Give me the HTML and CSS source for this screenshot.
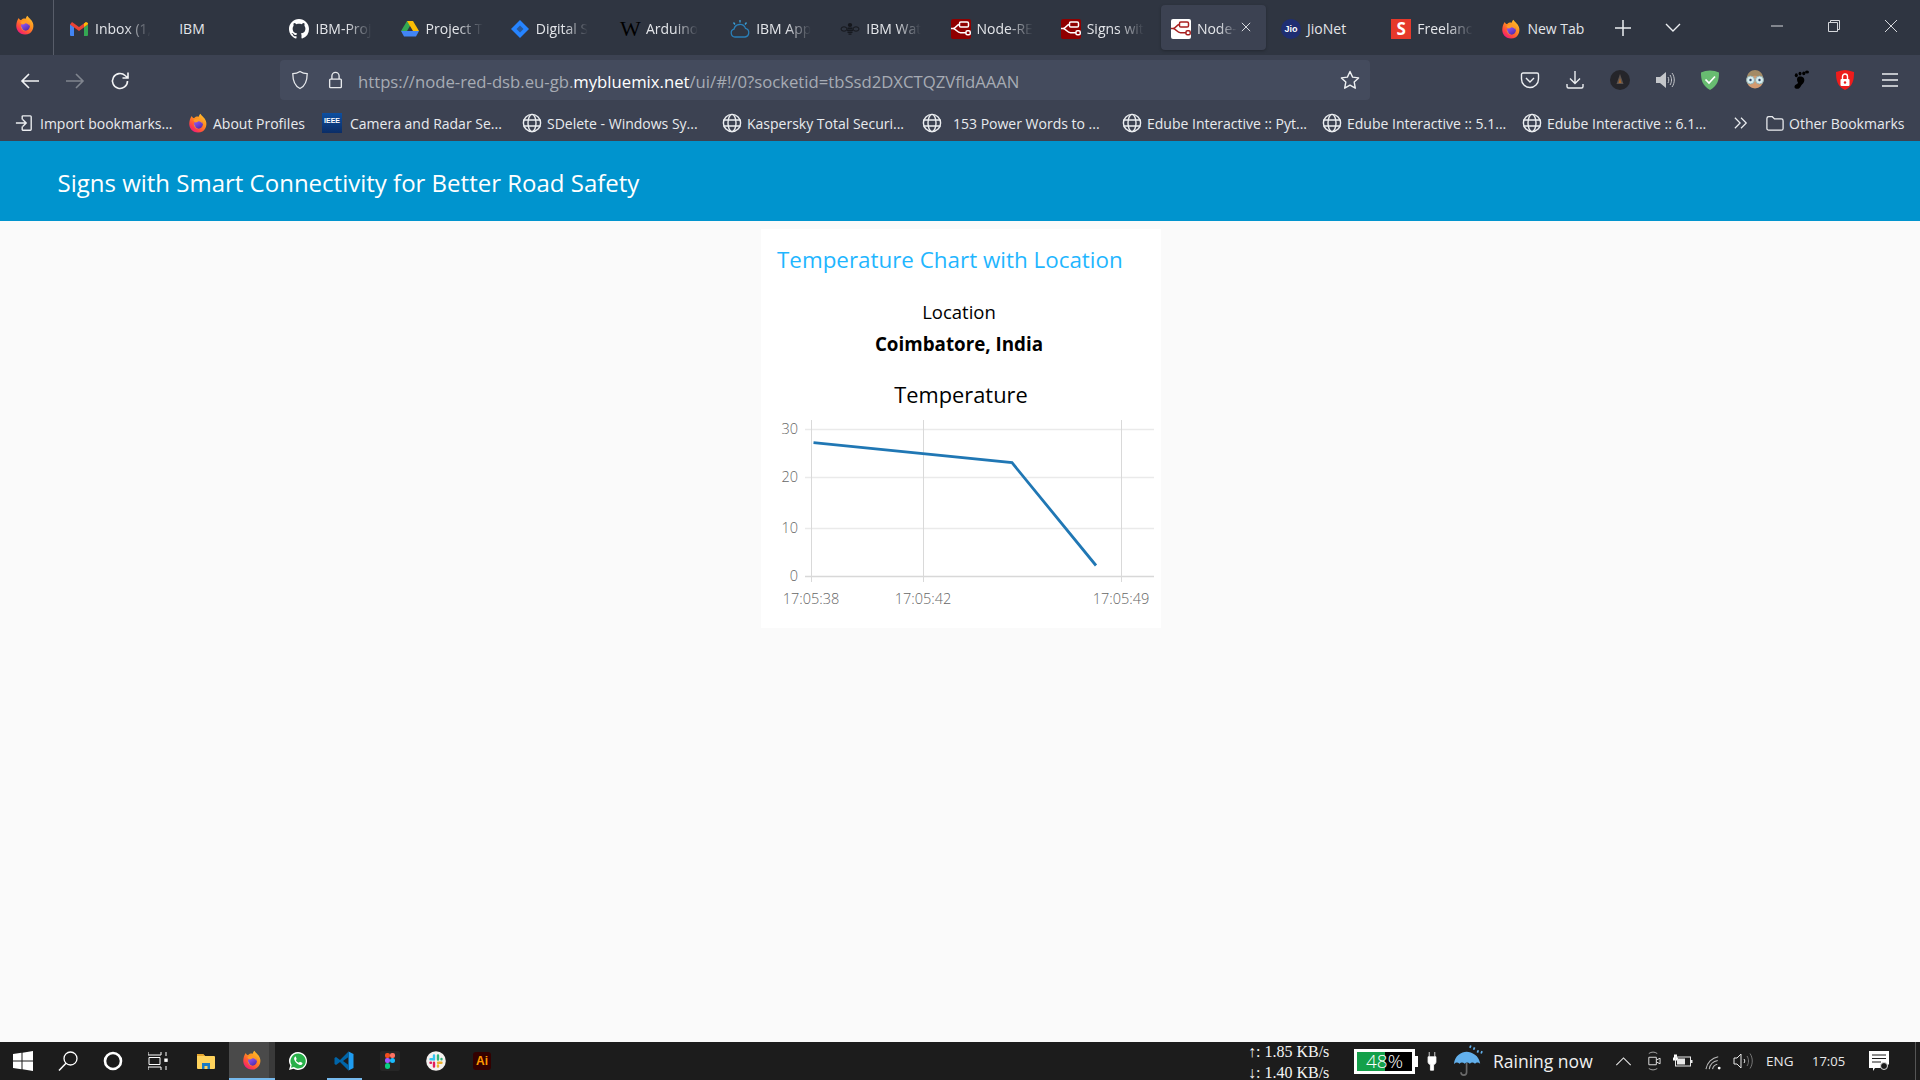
FILE: index.html
```html
<!DOCTYPE html>
<html lang="en">
<head>
<meta charset="utf-8">
<title>Node-RED Dashboard</title>
<link rel="stylesheet" href="styles.css">
</head>
<body>
<svg class="sprite" aria-hidden="true">
  <defs>
    <linearGradient id="ffg" x1="0.85" y1="0.05" x2="0.2" y2="0.95">
      <stop offset="0" stop-color="#ffc02e"/><stop offset="0.4" stop-color="#ff8f1f"/><stop offset="0.75" stop-color="#ff4a3d"/><stop offset="1" stop-color="#f0177f"/>
    </linearGradient>
    <linearGradient id="ffp" x1="0.2" y1="0" x2="0.8" y2="1"><stop offset="0" stop-color="#9a5cff"/><stop offset="1" stop-color="#4f2aa8"/></linearGradient>
    <symbol id="ff" viewBox="0 0 24 24">
      <path d="M4.500 3.500C5 5 6 6 7.500 6 9 4.500 11 4 13 4.500 13 3 14 1.500 15 .8c1 2.700 5 4.200 6.500 8.700C23.500 15 20.500 23.500 12 23.500 5 23.500 1.500 18 1.500 13c0-3 1-7 3-9.500z" fill="url(#ffg)"/>
      <circle cx="12.500" cy="13.500" r="5.300" fill="url(#ffp)"/>
      <path d="M6.500 8.500c2.500-2 6.500-2 9 0 1.500 1.200 2 3 1.800 4.500-1-2.200-3-3.200-5-3-.5 1-1.500 1.300-3 1.300C7.500 11 6.800 10 6.500 8.500z" fill="#ff9a26"/>
      <path d="M6.800 13c0 4 3 7 6.700 6.500-2.500-.5-4.500-2-5-4.500z" fill="#ffb534" opacity=".55"/>
    </symbol>
    <symbol id="globe" viewBox="0 0 20 20">
      <g fill="none" stroke="currentColor" stroke-width="1.400"><circle cx="10" cy="10" r="8.600"/><ellipse cx="10" cy="10" rx="4" ry="8.600"/><path d="M1.500 7h17M1.500 13h17"/></g>
    </symbol>
    <symbol id="nr" viewBox="0 0 20 20">
      <rect width="20" height="20" rx="2" fill="var(--bg)"/>
      <g fill="none" stroke="var(--fg)" stroke-width="1.500">
        <rect x="8.500" y="3" width="9" height="5" rx="1.300"/><rect x="15" y="11.800" width="4.200" height="4" rx="1.300"/>
        <path d="M0 9.500h2c3 0 3.500-4 6.500-4M2 9.500c3 0 4 4.300 7.500 4.300H15"/>
      </g>
    </symbol>
  </defs>
</svg>

<header class="tabbar">
  <div class="fx-btn"><svg class="ic20" viewBox="0 0 24 24"><use href="#ff"/></svg></div>
  <div class="tabs">
    <div class="tab"><svg class="ic20" viewBox="0 0 20 20"><path d="M1 17V5l4 3v9H2a1 1 0 0 1-1-1z" fill="#4285f4"/><path d="M19 17V5l-4 3v9h3a1 1 0 0 0 1-1z" fill="#34a853"/><path d="M1 5.500 10 12l9-6.500L17 3l-7 5-7-5z" fill="#ea4335"/><path d="M15 8l4-3V4l-2-1-2 1.500z" fill="#fbbc04"/></svg><span class="tab-text">Inbox (1,</span></div>
    <div class="tab"><span class="tab-text tab-text-full">IBM</span></div>
    <div class="tab"><svg class="ic20" viewBox="0 0 16 16"><path fill="#fff" d="M8 0C3.580 0 0 3.580 0 8c0 3.540 2.290 6.530 5.470 7.590.4.07.55-.17.55-.38 0-.19-.01-.82-.01-1.490-2.010.37-2.530-.49-2.690-.94-.09-.23-.48-.94-.82-1.130-.28-.15-.68-.52-.01-.53.63-.01 1.080.58 1.230.82.72 1.210 1.870.87 2.330.66.07-.52.28-.87.51-1.070-1.780-.2-3.640-.89-3.640-3.950 0-.87.31-1.590.82-2.150-.08-.2-.36-1.020.08-2.120 0 0 .67-.21 2.200.82.64-.18 1.320-.27 2-.27.68 0 1.360.09 2 .27 1.530-1.040 2.200-.82 2.200-.82.44 1.100.16 1.920.08 2.120.51.56.82 1.270.82 2.150 0 3.070-1.870 3.750-3.650 3.950.29.25.54.73.54 1.480 0 1.070-.01 1.930-.01 2.200 0 .21.15.46.55.38A8.013 8.013 0 0 0 16 8c0-4.420-3.580-8-8-8z"/></svg><span class="tab-text">IBM-Proj</span></div>
    <div class="tab"><svg class="ic20" viewBox="0 0 20 20"><path d="M7 2h6L7 12H1z" fill="#34a853"/><path d="M7 2h6l6 10h-6z" fill="#fbbc04"/><path d="M1 12h18l-3 5.500H4z" fill="#4285f4"/></svg><span class="tab-text">Project T</span></div>
    <div class="tab"><svg class="ic20" viewBox="0 0 20 20"><path d="M10 1l9 9-9 9-9-9z" fill="#2684ff"/><path d="M10 6.500 13.500 10 10 13.500 6.500 10z" fill="#2f3541" opacity=".55"/></svg><span class="tab-text">Digital S</span></div>
    <div class="tab"><span class="ic-w">W</span><span class="tab-text">Arduino</span></div>
    <div class="tab"><svg class="ic20" viewBox="0 0 20 20"><g fill="none" stroke="#2a7fb8" stroke-width="1.300"><path d="M5 18a4 4 0 0 1-1-7.800 6 6 0 0 1 11.500-.8A4.400 4.400 0 0 1 15 18z"/><path d="M10 1v2.500M3.500 3.500l1.500 2M16.500 3.500l-1.500 2" stroke="#3aa0d8"/></g></svg><span class="tab-text">IBM App</span></div>
    <div class="tab"><svg class="ic20" viewBox="0 0 20 20"><g fill="#15171c"><ellipse cx="10" cy="6" rx="2.200" ry="2"/><rect x="7.500" y="8.500" width="5" height="1.400"/><rect x="7" y="10.500" width="6" height="1.400"/><rect x="7.500" y="12.500" width="5" height="1.400"/><rect x="8.500" y="14.500" width="3" height="1.200"/></g><g fill="none" stroke="#15171c"><ellipse cx="4" cy="10" rx="3" ry="2.200"/><ellipse cx="16" cy="10" rx="3" ry="2.200"/></g></svg><span class="tab-text">IBM Wat</span></div>
    <div class="tab"><svg class="ic20 nr-dark"><use href="#nr"/></svg><span class="tab-text">Node-RE</span></div>
    <div class="tab"><svg class="ic20 nr-dark"><use href="#nr"/></svg><span class="tab-text">Signs wit</span></div>
    <div class="tab tab-active"><svg class="ic20 nr-light"><use href="#nr"/></svg><span class="tab-text">Node-</span>
      <svg class="tab-close" viewBox="0 0 12 12"><path d="M1 1l10 10M11 1 1 11" stroke="#e6e8ec" stroke-width="1.100"/></svg></div>
    <div class="tab"><span class="ic-jio">Jio</span><span class="tab-text tab-text-full">JioNet</span></div>
    <div class="tab"><span class="ic-s">S</span><span class="tab-text">Freelanc</span></div>
    <div class="tab"><svg class="ic20" viewBox="0 0 24 24"><use href="#ff"/></svg><span class="tab-text tab-text-full">New Tab</span></div>
  </div>
  <svg class="tb-plus" viewBox="0 0 16 16"><path d="M8 0v16M0 8h16" stroke="#eceef1" stroke-width="1.500"/></svg>
  <svg class="tb-chev" viewBox="0 0 16 10"><path d="M1 1l7 7 7-7" fill="none" stroke="#eceef1" stroke-width="1.400"/></svg>
  <div class="win-controls">
    <svg class="win-ic" viewBox="0 0 14 14"><path d="M1 7h12" stroke="#d6d8dc" stroke-width="1"/></svg>
    <svg class="win-ic" viewBox="0 0 14 14"><path d="M3.500 3.500V1.500h9v9h-2M1.500 3.500h9v9h-9z" fill="none" stroke="#d6d8dc"/></svg>
    <svg class="win-ic" viewBox="0 0 14 14"><path d="M1 1l12 12M13 1 1 13" stroke="#d6d8dc"/></svg>
  </div>
</header>

<nav class="toolbar">
  <div class="nav-group">
    <svg class="nav-ic" viewBox="0 0 20 20"><path d="M19 10H2M9 3l-7 7 7 7" fill="none" stroke="#f2f3f5" stroke-width="1.600"/></svg>
    <svg class="nav-ic" viewBox="0 0 20 20"><path d="M1 10h17M11 3l7 7-7 7" fill="none" stroke="#80858f" stroke-width="1.600"/></svg>
    <svg class="nav-ic" viewBox="0 0 20 20"><path d="M17.500 10a7.500 7.500 0 1 1-2.400-5.500L18 7M18 1.500V7h-5.500" fill="none" stroke="#f2f3f5" stroke-width="1.600"/></svg>
  </div>
  <div class="urlbar">
    <svg class="url-shield" viewBox="0 0 20 22"><path d="M10 1.500c2.500 1.800 5 2.500 8 2.500 0 7-1 13-8 16.500C3 17 2 11 2 4c3 0 5.500-.7 8-2.500z" fill="none" stroke="#e7e9ec" stroke-width="1.400"/></svg>
    <svg class="url-lock" viewBox="0 0 16 20"><path d="M4 9V5.500a4 4 0 0 1 8 0V9M2.500 9h11a1 1 0 0 1 1 1v7.500a1 1 0 0 1-1 1h-11a1 1 0 0 1-1-1V10a1 1 0 0 1 1-1z" fill="none" stroke="#e7e9ec" stroke-width="1.500"/></svg>
    <div class="url-text">https://node-red-dsb.eu-gb.<span class="url-host">mybluemix.net</span>/ui/#!/0?socketid=tbSsd2DXCTQZVfldAAAN</div>
    <svg class="url-star" viewBox="0 0 20 20"><path d="M10 1.500l2.600 5.600 6 .8-4.400 4.200 1.100 6.100L10 15.200l-5.300 3 1.100-6.100L1.400 7.900l6-.8z" fill="none" stroke="#eef0f2" stroke-width="1.400" stroke-linejoin="round"/></svg>
  </div>
  <div class="ext-group">
    <div class="ext"><svg class="ic20" viewBox="0 0 20 20"><path d="M3 3h14a1.500 1.500 0 0 1 1.500 1.500V9a8.500 8.500 0 0 1-17 0V4.500A1.500 1.500 0 0 1 3 3z" fill="none" stroke="#eceef1" stroke-width="1.400"/><path d="M6 8l4 4 4-4" fill="none" stroke="#eceef1" stroke-width="1.400"/></svg></div>
    <div class="ext"><svg class="ic20" viewBox="0 0 20 20"><path d="M10 1v12M5 8.500l5 5 5-5M2 14v2.500a1.500 1.500 0 0 0 1.500 1.500h13a1.500 1.500 0 0 0 1.500-1.500V14" fill="none" stroke="#eceef1" stroke-width="1.400"/></svg></div>
    <div class="ext"><svg class="ic20" viewBox="0 0 20 20"><circle cx="10" cy="10" r="10" fill="#25252a"/><path d="M10 4l3.500 10h-7z" fill="#5c5450"/><path d="M10 8l1.500 5h-3z" fill="#a5662e"/></svg></div>
    <div class="ext"><svg class="ic20" viewBox="0 0 20 20"><path d="M1 7h4l6-5v16l-6-5H1z" fill="#c4c6ca"/><path d="M13 7c1 2 1 4 0 6M15 5c2 3 2 7 0 10M17 3c3 4 3 10 0 14" fill="none" stroke="#c4c6ca" stroke-width="1"/></svg></div>
    <div class="ext"><svg class="ic20" viewBox="0 0 20 20"><path d="M10 .5c3 0 6.500.8 9 2 0 7-1 13-9 17.500-8-4.500-9-10.500-9-17.500 2.500-1.200 6-2 9-2z" fill="#68bc71"/><path d="M5.500 9.500l3.500 3.500 6-6.500" fill="none" stroke="#fff" stroke-width="1.700"/></svg></div>
    <div class="ext"><svg class="ic20" viewBox="0 0 20 20"><circle cx="10" cy="10" r="8.500" fill="#d49a70"/><path d="M2 8c0-5 4-8 8-8s8 3 8 8c-3-3-13-3-16 0z" fill="#a38b66"/><circle cx="5.500" cy="10" r="4" fill="#d6ecef" stroke="#8aa" stroke-width=".8"/><circle cx="14.500" cy="10" r="4" fill="#d6ecef" stroke="#8aa" stroke-width=".8"/><circle cx="5.500" cy="10" r="1.200" fill="#346"/><circle cx="14.500" cy="10" r="1.200" fill="#346"/></svg></div>
    <div class="ext"><svg class="ic20" viewBox="0 0 20 20"><g fill="#000"><path d="M8 7c2-1 5-.5 6 1.500 1 2.500-.5 5-2 6-1 1-1 2-2.500 3.500S4 19 4.500 16.500 8 14.500 8 12.500C7 11.500 6.500 8 8 7z"/><ellipse cx="6.300" cy="5.300" rx="1.500" ry="2"/><ellipse cx="10" cy="3.600" rx="1.500" ry="1.900"/><ellipse cx="13.800" cy="3.400" rx="1.600" ry="1.800"/><ellipse cx="17" cy="2" rx="2" ry="1.600"/></g></svg></div>
    <div class="ext"><svg class="ic20" viewBox="0 0 20 20"><path d="M10 0c3 .3 6 1 9 2 0 8-1 14-9 18-8-4-9-10-9-18 3-1 6-1.700 9-2z" fill="#ee1c1c"/><rect x="5.500" y="9" width="9" height="7" rx="1" fill="#fff"/><path d="M7.500 9V6.500a2.500 2.500 0 0 1 5 0V9" fill="none" stroke="#fff" stroke-width="1.400"/><circle cx="10" cy="12.500" r="1.200" fill="#ee1c1c"/></svg></div>
    <div class="ext"><svg class="ic20" viewBox="0 0 20 20"><path d="M2 4h16M2 10h16M2 16h16" stroke="#eceef1" stroke-width="1.500"/></svg></div>
  </div>
</nav>

<nav class="bookmarks">
  <div class="bm bm-import"><svg class="ic18" viewBox="0 0 20 20"><path d="M8 2h9a1 1 0 0 1 1 1v14a1 1 0 0 1-1 1H8M8 6V2M8 18v-4M1 10h11M8.500 6l4 4-4 4" fill="none" stroke="#eceef1" stroke-width="1.500"/></svg><span class="bm-text">Import bookmarks...</span></div>
  <div class="bm bm-profiles"><svg class="ic20" viewBox="0 0 24 24"><use href="#ff"/></svg><span class="bm-text">About Profiles</span></div>
  <div class="bm bm-wide"><span class="ic-ieee">IEEE</span><span class="bm-text bm-gap-s">Camera and Radar Se...</span></div>
  <div class="bm bm-wide"><svg class="ic20"><use href="#globe"/></svg><span class="bm-text">SDelete - Windows Sy...</span></div>
  <div class="bm bm-wide"><svg class="ic20"><use href="#globe"/></svg><span class="bm-text">Kaspersky Total Securi...</span></div>
  <div class="bm bm-wide"><svg class="ic20"><use href="#globe"/></svg><span class="bm-text bm-gap">153 Power Words to ...</span></div>
  <div class="bm bm-wide"><svg class="ic20"><use href="#globe"/></svg><span class="bm-text">Edube Interactive :: Pyt...</span></div>
  <div class="bm bm-wide"><svg class="ic20"><use href="#globe"/></svg><span class="bm-text">Edube Interactive :: 5.1...</span></div>
  <div class="bm bm-wide"><svg class="ic20"><use href="#globe"/></svg><span class="bm-text">Edube Interactive :: 6.1...</span></div>
  <svg class="bm-more" viewBox="0 0 16 14"><path d="M1 1l6 6-6 6M8 1l6 6-6 6" fill="none" stroke="#eceef1" stroke-width="1.400"/></svg>
  <div class="bm"><svg class="ic18" viewBox="0 0 20 18"><path d="M1 4a2 2 0 0 1 2-2h4l2.500 2.500H17a2 2 0 0 1 2 2V15a2 2 0 0 1-2 2H3a2 2 0 0 1-2-2z" fill="none" stroke="#eceef1" stroke-width="1.400"/></svg><span class="bm-text">Other Bookmarks</span></div>
</nav>

<div class="app-header"><h1 class="app-title">Signs with Smart Connectivity for Better Road Safety</h1></div>

<main class="content">
  <section class="card">
    <h2 class="card-title">Temperature Chart with Location</h2>
    <div class="loc">
      <div class="loc-label">Location</div>
      <div class="loc-value">Coimbatore, India</div>
    </div>
    <div class="chart-title">Temperature</div>
    <svg class="chart" viewBox="761 412 400 216">
      <g class="grid-h">
        <path d="M805 429.500H1154M805 477.500H1154M805 528.500H1154"/>
      </g>
      <path class="axis-x" d="M805 576.500H1154"/>
      <path class="grid-v" d="M811.500 420V582M923.500 420V582M1121.500 420V582"/>
      <polyline class="series" points="813.500,442.700 1012,462.700 1096,565.500"/>
      <g class="ytick">
        <text x="798" y="434">30</text><text x="798" y="482">20</text><text x="798" y="533">10</text><text x="798" y="581">0</text>
      </g>
      <g class="xtick">
        <text x="811" y="604">17:05:38</text><text x="923" y="604">17:05:42</text><text x="1121" y="604">17:05:49</text>
      </g>
    </svg>
  </section>
</main>

<footer class="taskbar">
  <div class="task-group">
    <div class="task"><svg class="ic20" viewBox="0 0 20 20"><path d="M0 3l8.500-1.200V9.500H0zM9.500 1.700 20 0v9.500H9.500zM0 10.500h8.500v7.700L0 17zM9.500 10.500H20V20L9.500 18.300z" fill="#fff"/></svg></div>
    <div class="task"><svg class="ic20" viewBox="0 0 20 20"><circle cx="12.500" cy="7.500" r="6.500" fill="none" stroke="#fff" stroke-width="1.300"/><path d="M8 12.300 1 19.500" stroke="#fff" stroke-width="1.500"/></svg></div>
    <div class="task"><svg class="ic20" viewBox="0 0 20 20"><circle cx="10" cy="10" r="8" fill="none" stroke="#fff" stroke-width="2.600"/></svg></div>
    <div class="task"><svg class="ic20" viewBox="0 0 20 20"><path d="M0 1v3h13V1M0 19v-3h13v3M1 6.500h11v7H1zM18 1v4M18 15v4" fill="none" stroke="#fff" stroke-width="1"/><rect x="16.300" y="7.500" width="3.400" height="3.400" fill="#fff"/></svg></div>
  </div>
  <div class="task-group task-apps">
    <div class="task-app"><svg class="ic20" viewBox="0 0 20 18"><path d="M1 3a1 1 0 0 1 1-1h5l2 2h9a1 1 0 0 1 1 1v11a1 1 0 0 1-1 1H2a1 1 0 0 1-1-1z" fill="#ffd35c"/><path d="M1 2h6l2 2H1z" fill="#e8a72e"/><path d="M6 17v-6h8v6h-2.500v-3h-3v3z" fill="#1a7bc4"/></svg></div>
    <div class="task-app task-active"><svg class="ic20" viewBox="0 0 24 24"><use href="#ff"/></svg></div>
    <div class="task-app"><svg class="ic20" viewBox="0 0 20 20"><path d="M10 1a9 9 0 0 0-7.700 13.600L1 19l4.500-1.200A9 9 0 1 0 10 1z" fill="#fff"/><path d="M10 2.500a7.500 7.500 0 0 0-6.300 11.500L3 16.800l2.900-.7A7.500 7.500 0 1 0 10 2.500z" fill="#29b04a"/><path d="M7 5.800c-.9.700-1.200 2-.5 3.500 1 2 2.700 3.600 4.700 4.400 1.400.5 2.700.1 3.200-1 .2-.6-.1-.9-.6-1.100l-1.500-.7c-.4-.2-.6 0-.9.400-.3.400-.6.600-1.100.3a6 6 0 0 1-2.300-2.200c-.2-.4.1-.7.400-1 .2-.3.300-.5.100-.9l-.6-1.500c-.2-.5-.6-.6-.9-.2z" fill="#fff"/></svg></div>
    <div class="task-app task-open"><svg class="ic20" viewBox="0 0 20 20"><path d="M14.500.5 19.500 3v14l-5 2.500z" fill="#1f9cf0"/><path d="M14.500.5 6 9 2 6 .5 7v6L2 14l4-3 8.500 8.500V14L9 10l5.500-4z" fill="#0065a9"/></svg></div>
    <div class="task-app"><svg class="ic20" viewBox="0 0 20 20"><rect width="20" height="20" rx="2" fill="#262626"/><rect x="5" y="2" width="5" height="5" rx="2" fill="#f24e1e"/><rect x="10" y="2" width="5" height="5" rx="2" fill="#ff7262"/><rect x="5" y="7" width="5" height="5" rx="2" fill="#a259ff"/><circle cx="12.500" cy="9.500" r="2.500" fill="#1abcfe"/><rect x="5" y="12" width="5" height="6" rx="2.500" fill="#0acf83"/></svg></div>
    <div class="task-app"><svg class="ic20" viewBox="0 0 20 20"><circle cx="10" cy="10" r="9.800" fill="#f4f1ef"/><g stroke-width="2.400" stroke-linecap="round"><path d="M8 4.500v4M4.500 8.300H8" stroke="#36c5f0" fill="none"/><path d="M15.500 8v.3M12 4.500v4" stroke="#2eb67d"/><path d="M15.500 11.700H12M12 15.500v-1" stroke="#ecb22e"/><path d="M4.500 11.700H5M8 11.700v3.800" stroke="#e01e5a"/></g></svg></div>
    <div class="task-app"><span class="ic-ai">Ai</span></div>
  </div>
  <div class="tray">
    <div class="netspeed"><div>↑: 1.85 KB/s</div><div>↓: 1.40 KB/s</div></div>
    <div class="battery-big"><span class="battery-big-text">48%</span></div>
    <svg class="plug" viewBox="0 0 10 24"><path d="M1.500 0v6M8.500 0v6M0 6h10v7a4 4 0 0 1-3 3v7H3v-7a4 4 0 0 1-3-3z" fill="#fff" stroke="#fff"/></svg>
    <svg class="umbrella" viewBox="0 0 32 34"><path d="M1 20C2 11 9 7 14.500 7S28 11 29 20c-2-2-4-2-5.500 0-2-2-4-2-5.500 0-2-2-4-2-5.500 0-2-2-4-2-5.500 0-2-2-4-2-5.500 0z" fill="#62b0ec"/><path d="M14.500 19v10a3 3 0 0 1-6 0" fill="none" stroke="#6a6a6a" stroke-width="1.800"/><path d="M22 5l1-2.500M26 8l1-2.500M30 9l1-2.500M18 3l1-2.500" stroke="#62b0ec" stroke-width="1.800"/></svg>
    <span class="weather">Raining now</span>
    <svg class="tray-chev" viewBox="0 0 18 10"><path d="M1 9l8-8 8 8" fill="none" stroke="#e8e8e8" stroke-width="1.200"/></svg>
    <svg class="tray-meet" viewBox="0 0 16 22"><path d="M3 7h8v8H3zM11 10l4-2v6l-4-2" fill="none" stroke="#e8e8e8"/><path d="M3 3c3-2 6-2 9 0M3 19c3 2 6 2 9 0" fill="none" stroke="#aaa"/></svg>
    <svg class="tray-batt" viewBox="0 0 20 14"><path d="M1 .5v3h3v-3M0 3.500h5v3H0z" fill="#fff"/><rect x="2.500" y="3" width="15" height="9" fill="none" stroke="#e8e8e8"/><rect x="4" y="4.500" width="8" height="6" fill="#e8e8e8"/><rect x="18" y="6" width="1.500" height="3" fill="#e8e8e8"/></svg>
    <svg class="tray-wifi" viewBox="0 0 18 18"><path d="M1 17a16 16 0 0 1 13-13M4.500 17a11 11 0 0 1 9-9M8 17a6.500 6.500 0 0 1 5-5" fill="none" stroke="#bbb" stroke-width="1.100"/><circle cx="15" cy="16" r="1.500" fill="#fff"/></svg>
    <svg class="tray-vol" viewBox="0 0 20 20"><path d="M1 7h3l4-4v14l-4-4H1z" fill="none" stroke="#e8e8e8"/><path d="M11 8c1 1.500 1 2.500 0 4" fill="none" stroke="#e8e8e8"/><path d="M14 5c2 3 2 7 0 10M17 2.500c3 4.500 3 10.500 0 15" fill="none" stroke="#777"/></svg>
    <span class="tray-lang">ENG</span>
    <span class="tray-clock">17:05</span>
    <svg class="tray-notif" viewBox="0 0 20 20"><path d="M0 0h20v13l-4 4H6l-2 3v-3H0z" fill="#fff"/><path d="M3 4h14M3 7.500h14M3 11h9" stroke="#1c1c1c" stroke-width="1.200"/><circle cx="15" cy="15" r="3.500" fill="#1c1c1c" stroke="#ddd"/></svg>
    <span class="tray-end"></span>
  </div>
</footer>
</body>
</html>
```
FILE: styles.css
```css
* { box-sizing: border-box; }
html, body { margin: 0; height: 100%; }
body {
  display: flex;
  flex-direction: column;
  height: 1080px;
  overflow: hidden;
  font-family: "Open Sans", "Noto Sans", sans-serif;
  background: #fafafa;
}
.sprite { display: block; width: 0; height: 0; overflow: hidden; }
.ic20 { display: block; width: 20px; height: 20px; flex: none; color: #eceef1; }
.ic18 { display: block; width: 18px; height: 18px; flex: none; }

/* Tab strip */
.tabbar {
  display: flex;
  align-items: flex-start;
  height: 55px;
  flex: none;
  background: #2f3541;
  color: #e4e6ea;
}
.fx-btn {
  width: 54px;
  height: 55px;
  padding: 15px 0 0 15px;
  border-right: 1px solid #585d69;
  flex: none;
}
.tabs { display: flex; margin: 5px 0 0 5px; flex: none; }
.tab {
  display: flex;
  align-items: center;
  gap: 6px;
  width: 105px;
  height: 45px;
  margin-right: 5.2px;
  padding: 2px 0 0 10px;
  border-radius: 4px;
  flex: none;
}
.tab-active { background: #3c4252; box-shadow: 0 1px 3px rgba(0,0,0,.25); position: relative; }
.tab-text {
  width: max-content;
  white-space: nowrap;
  font-size: 14px;
  color: #e4e6ea;
  -webkit-mask-image: linear-gradient(90deg, #000 55%, transparent 100%);
  mask-image: linear-gradient(90deg, #000 55%, transparent 100%);
}
.tab-text-full { -webkit-mask-image: none; mask-image: none; }
.tab-close { position: absolute; right: 15px; top: 17px; width: 10px; height: 10px; }
.ic-w { width: 20px; font: 22px/20px "Liberation Serif", serif; color: #000; text-align: center; flex: none; }
.ic-jio {
  width: 20px; height: 20px; flex: none; border-radius: 50%;
  background: #1f2e72; color: #fff; font: 700 9px/20px "Liberation Sans", sans-serif; text-align: center;
}
.ic-s {
  width: 20px; height: 20px; flex: none;
  background: #e6392b; color: #fff; font: 700 17px/20px "Open Sans", sans-serif; text-align: center;
}
.nr-dark { --bg: #8f0000; --fg: #fff; }
.nr-light { --bg: #fff; --fg: #a82020; }
.tb-plus { width: 16px; height: 16px; margin: 20px 0 0 13px; flex: none; }
.tb-chev { width: 16px; height: 10px; margin: 23px 0 0 34px; flex: none; }
.win-controls { display: flex; gap: 43px; margin: 19px 0 0 auto; padding-right: 22px; }
.win-ic { width: 14px; height: 14px; display: block; }

/* Toolbar */
.toolbar {
  display: flex;
  align-items: flex-start;
  height: 53px;
  flex: none;
  background: #3c4252;
  padding-top: 5px;
}
.nav-group { display: flex; gap: 25px; width: 280px; padding: 11px 0 0 20px; flex: none; }
.nav-ic { width: 20px; height: 20px; display: block; flex: none; }
.urlbar {
  display: flex;
  align-items: center;
  width: 1090px;
  height: 40px;
  flex: none;
  background: #444b5d;
  border-radius: 4px;
  padding-left: 11px;
}
.url-shield { width: 18px; height: 20px; flex: none; margin-right: 19px; }
.url-lock { width: 15px; height: 18px; flex: none; margin-right: 15px; }
.url-text { font-size: 16.700px; line-height: 24px; padding-top: 3px; color: #a7abb4; white-space: nowrap; flex: 1; }
.url-host { color: #fff; }
.url-star { width: 20px; height: 20px; margin-right: 10px; flex: none; }
.ext-group { display: flex; margin-left: 137.5px; padding-top: 10px; }
.ext { width: 45px; display: flex; justify-content: center; }

/* Bookmarks */
.bookmarks {
  display: flex;
  align-items: center;
  height: 33px;
  flex: none;
  background: #3c4252;
  padding: 0 0 3px 15px;
}
.bm { display: flex; align-items: center; gap: 5px; flex: none; }
.bm-import { width: 173px; gap: 7px; }
.bm-profiles { width: 134px; }
.bm-wide { width: 200px; }
.bm-gap-s { margin-left: 3px; }
.bm-gap { margin-left: 6px; }
.bm-text { font-size: 14px; color: #e9ebee; white-space: nowrap; }
.ic-ieee {
  width: 20px; height: 20px; flex: none;
  background: linear-gradient(#0d4fa0, #0b2d66);
  color: #fff; font: 700 7px/16px "Liberation Sans", sans-serif; text-align: center;
}
.bm-more { width: 14px; height: 14px; margin: 0 18px 0 12px; flex: none; }

/* Dashboard */
.app-header {
  display: flex;
  align-items: center;
  height: 80px;
  flex: none;
  background: #0094ce;
  padding: 3px 0 0 57.500px;
}
.app-title { margin: 0; font-size: 24px; font-weight: 400; color: #fff; }
.content {
  flex: 1;
  display: flex;
  justify-content: center;
  align-items: flex-start;
  padding: 8px 0 0 2px;
  background: #fafafa;
}
.card {
  width: 400px;
  height: 399px;
  background: #fff;
  display: flex;
  flex-direction: column;
}
.card-title {
  margin: 13px 0 0 16px;
  font-size: 22.400px;
  font-weight: 400;
  line-height: 36px;
  color: #1fb6ff;
  white-space: nowrap;
}
.loc { margin-top: 18px; padding-right: 4px; text-align: center; color: #000; font-size: 18.500px; line-height: 31px; }
.loc-value { margin-top: 2px; font-weight: 700; font-size: 18.800px; }
.chart-title { margin-top: 18px; text-align: center; font-size: 21.800px; line-height: 34px; color: #000; }
.chart { display: block; width: 400px; height: 216px; }
.grid-h path { stroke: #eaeaea; stroke-width: 1.500; fill: none; }
.axis-x { stroke: #d8d8d8; stroke-width: 1.500; fill: none; }
.grid-v { stroke: #d9d9d9; stroke-width: 1; fill: none; }
.series { stroke: #2077b4; stroke-width: 2.800; fill: none; }
.ytick text, .xtick text { font-family: "Open Sans", sans-serif; font-weight: 300; font-size: 14.500px; fill: #666; }
.ytick text { text-anchor: end; }
.xtick text { text-anchor: middle; }

/* Taskbar */
.taskbar {
  display: flex;
  align-items: center;
  height: 38px;
  flex: none;
  background: #1c1c1c;
  color: #fff;
}
.task-group { display: flex; height: 38px; flex: none; }
.task { width: 45px; display: flex; align-items: center; justify-content: center; }
.task-apps { margin-left: 3px; }
.task-app { width: 46px; display: flex; align-items: center; justify-content: center; position: relative; }
.task-active { background: linear-gradient(90deg, #4a4a4a 0 40px, #3a3a3a 40px); border-bottom: 2px solid #76b9ed; }
.task-open::after { content: ""; position: absolute; left: 6px; bottom: 0; width: 35px; height: 2px; background: #76b9ed; }
.ic-ai {
  width: 18px; height: 18px; border-radius: 3px;
  background: #330000; color: #ff9a00;
  font: 700 12px/18px "Liberation Sans", sans-serif; text-align: center;
}
.tray { display: flex; align-items: center; height: 38px; margin-left: 743px; flex: none; }
.netspeed { width: 106px; font: 16px/21px "Liberation Serif", serif; color: #f4f4f4; white-space: nowrap; margin-top: 2px; }
.battery-big {
  position: relative;
  width: 61px; height: 25px;
  border: 3px solid #fff;
  background: linear-gradient(90deg, #14a04a 0 28px, #000 28px);
  display: flex; align-items: center; justify-content: center;
  flex: none;
}
.battery-big::after { content: ""; position: absolute; right: -6px; top: 4px; width: 3px; height: 11px; background: #fff; }
.battery-big-text { font-size: 19px; line-height: 19px; color: #fff; font-weight: 300; }
.plug { width: 10px; height: 19px; margin-left: 12px; flex: none; }
.umbrella { width: 30px; height: 32px; margin: 0 0 0 16px; flex: none; }
.weather { margin-left: 10px; font-size: 17.500px; color: #f0f0f0; white-space: nowrap; width: 97px; flex: none; }
.tray-chev { width: 17px; height: 9px; margin-left: 25px; flex: none; }
.tray-meet { width: 15px; height: 22px; margin-left: 14px; flex: none; }
.tray-batt { width: 20px; height: 14px; margin-left: 12px; flex: none; }
.tray-wifi { width: 17px; height: 17px; margin-left: 12px; flex: none; }
.tray-vol { width: 20px; height: 20px; margin-left: 11px; flex: none; }
.tray-lang { margin-left: 13px; width: 28px; font-size: 13.500px; color: #e8e8e8; flex: none; }
.tray-clock { margin-left: 18px; width: 33px; font-size: 13px; color: #e8e8e8; flex: none; }
.tray-notif { width: 20px; height: 20px; margin-left: 24px; flex: none; }
.tray-end { width: 1px; height: 38px; margin-left: 26px; background: #555; flex: none; }
```
